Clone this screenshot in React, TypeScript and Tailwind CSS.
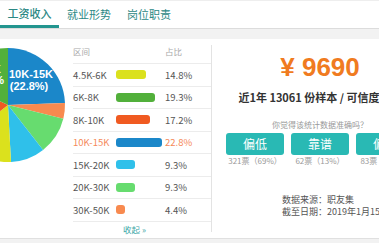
import React from 'react';

const slices = [
  { from: 0, to: 88, color: '#1b87c9' },
  { from: 88, to: 104, color: '#f88a4f' },
  { from: 104, to: 142, color: '#67dc6f' },
  { from: 142, to: 177, color: '#2fc0ea' },
  { from: 177, to: 232, color: '#dbe11d' },
  { from: 232, to: 295, color: '#f05a21' },
  { from: 295, to: 360, color: '#52b03b' },
];

const rows = [
  { range: '4.5K-6K', pct: 14.8, color: '#dbe11d' },
  { range: '6K-8K', pct: 19.3, color: '#52b03b' },
  { range: '8K-10K', pct: 17.2, color: '#f05a21' },
  { range: '10K-15K', pct: 22.8, color: '#1b87c9', active: true },
  { range: '15K-20K', pct: 9.3, color: '#2fc0ea' },
  { range: '20K-30K', pct: 9.3, color: '#67dc6f' },
  { range: '30K-50K', pct: 4.4, color: '#f88a4f' },
];

const votes = [
  { label: '偏低', count: '321票（69%）' },
  { label: '靠谱', count: '62票（13%）' },
  { label: '偏高', count: '83票（18%）' },
];

function arc(cx: number, cy: number, r: number, a0: number, a1: number) {
  const rad = (a: number) => (a * Math.PI) / 180;
  const x0 = cx + r * Math.sin(rad(a0));
  const y0 = cy - r * Math.cos(rad(a0));
  const x1 = cx + r * Math.sin(rad(a1));
  const y1 = cy - r * Math.cos(rad(a1));
  const large = a1 - a0 > 180 ? 1 : 0;
  return `M${cx} ${cy} L${x0} ${y0} A${r} ${r} 0 ${large} 1 ${x1} ${y1} Z`;
}

function Pie() {
  return (
    <svg width="73" height="198" viewBox="0 0 73 198">
      {slices.map((s, i) => (
        <path key={i} d={arc(8, 66, 57, s.from, s.to)} fill={s.color} />
      ))}
      <g fontFamily='"Liberation Sans", sans-serif' fontWeight="bold" fontSize="11" fill="#fff">
        <text x="31" y="39" textAnchor="middle">10K-15K</text>
        <text x="29" y="51" textAnchor="middle">(22.8%)</text>
        <text x="1" y="34" textAnchor="end">6K-8K</text>
        <text x="4" y="45" textAnchor="end">(19.3%</text>
      </g>
    </svg>
  );
}

export default function App() {
  return (
    <div
      className="w-[379px] h-[243px] overflow-hidden bg-white flex flex-col"
      style={{ fontFamily: '"Noto Sans CJK SC", "Noto Sans", sans-serif' }}
    >
      <div className="h-[29px] shrink-0 flex border-t border-[#eeeeee] border-b border-b-[#dcdcdc] text-[11px] text-[#2b8884]">
        <div className="w-[59px] flex items-center justify-center border-b-[3px] border-[#23958f] font-medium">工资收入</div>
        <div className="w-[60px] flex items-center justify-center">就业形势</div>
        <div className="w-[60px] flex items-center justify-center">岗位职责</div>
      </div>
      <div className="h-[10px] shrink-0 bg-[#f2f2f2]" />

      <div className="flex h-[199px] shrink-0">
        <div className="w-[73px] shrink-0 overflow-hidden">
          <Pie />
        </div>

        <div className="w-[138px] shrink-0 flex flex-col text-[9.5px] text-[#555]">
          <div className="h-[25px] flex items-end pb-[5px] border-b border-[#ececec] text-[#aaa] text-[8.5px]">
            <span className="w-[92px]">区间</span>
            <span>占比</span>
          </div>
          {rows.map((r) => (
            <div
              key={r.range}
              className={`h-[22.5px] flex items-center border-b border-[#ececec] ${r.active ? 'text-[#f5895a]' : ''}`}
            >
              <span className="w-[43px] shrink-0">{r.range}</span>
              <div className="w-[49px] shrink-0">
                <div className="h-[9px] rounded-[3px]" style={{ width: r.pct * 2, background: r.color }} />
              </div>
              <span>{r.pct}%</span>
            </div>
          ))}
          <div className="pt-[1px] pl-[50px] text-[8.5px] text-[#3aa6a6]">收起 »</div>
        </div>

        <div className="w-px shrink-0 bg-[#e3e3e3] my-[6px]" />

        <div className="w-[216px] shrink-0 flex flex-col items-center">
          <div
            className="mt-[15px] text-[26px] leading-[26px] font-bold text-[#f07b20]"
            style={{ fontFamily: '"Liberation Sans", Arial, sans-serif' }}
          >
            ¥ 9690
          </div>
          <div className="mt-[10px] text-[11px] leading-[14px] font-bold text-[#333] whitespace-nowrap">
            近1年 13061 份样本 / 可信度：高
          </div>
          <div className="mt-[16px] text-[8px] leading-[10px] text-[#999]">你觉得该统计数据准确吗？</div>
          <div className="mt-[3px] flex gap-[7px]">
            {votes.map((v) => (
              <div key={v.label} className="flex flex-col items-center">
                <div className="w-[58px] h-[22px] rounded-[3px] bg-[#29b9b4] text-white text-[12px] flex items-center justify-center">
                  {v.label}
                </div>
                <div className="mt-[1px] text-[8px] leading-[10px] text-[#999] whitespace-nowrap">{v.count}</div>
              </div>
            ))}
          </div>
          <div className="self-start ml-[70px] mt-[28px] text-[9px] leading-[12px] text-[#555] whitespace-nowrap">
            <div>数据来源：职友集</div>
            <div>截至日期：2019年1月15日</div>
          </div>
        </div>
      </div>

      <div className="flex-1 bg-[#f2f2f2] border-t border-[#e0e0e0]" />
    </div>
  );
}
